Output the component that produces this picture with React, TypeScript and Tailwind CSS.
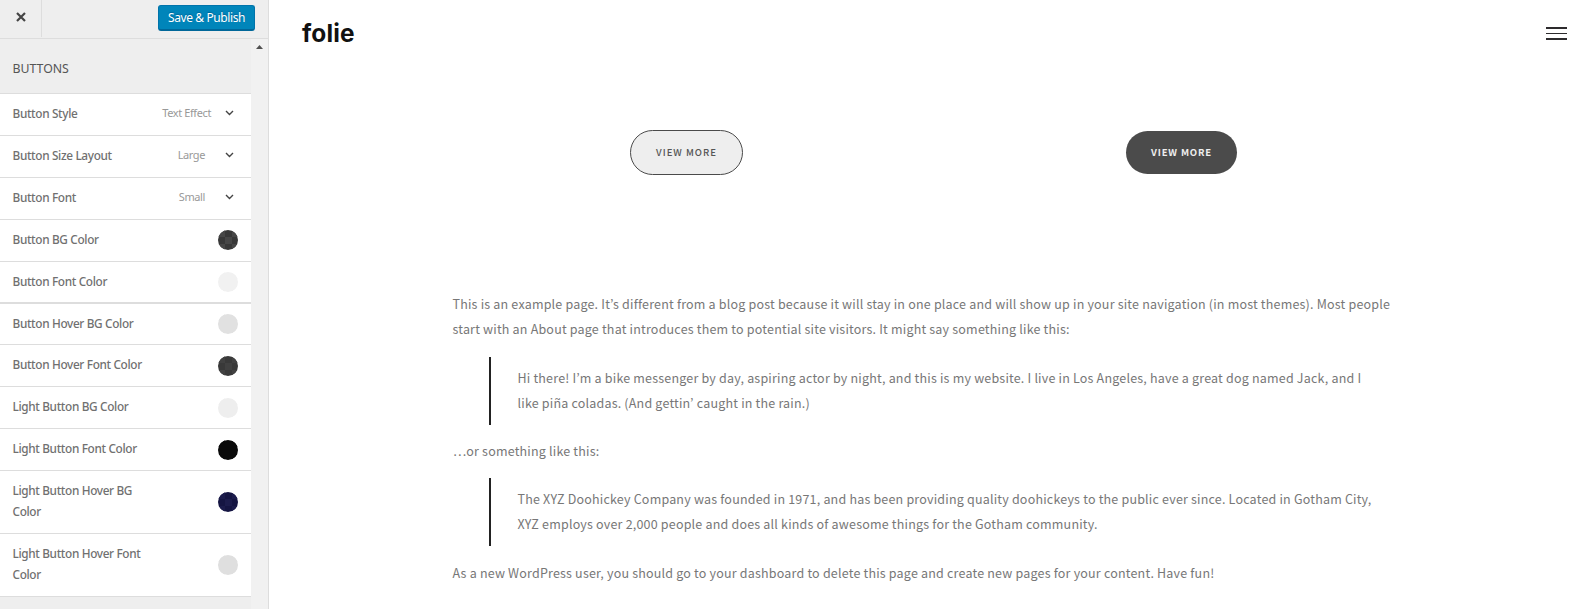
import React from 'react';

type Row = {
  label: string;
  value?: string;
  swatch?: string;
  check?: string;
  box: string;
};

const rows: Row[] = [
  { label: 'Button Style', value: 'Text Effect', box: 'h-[42px] border-b' },
  { label: 'Button Size Layout', value: 'Large', box: 'h-[42px] border-b' },
  { label: 'Button Font', value: 'Small', box: 'h-[42px] border-b' },
  { label: 'Button BG Color', swatch: '#383838', check: '#474747', box: 'h-[42px] border-b [&>svg]:mb-[1px]' },
  { label: 'Button Font Color', swatch: '#f1f1f1', check: '#f1f1f1', box: 'h-[42px] border-b-2' },
  { label: 'Button Hover BG Color', swatch: '#e1e1e1', check: '#e1e1e1', box: 'h-[41px] border-b' },
  { label: 'Button Hover Font Color', swatch: '#393939', check: '#414141', box: 'h-[42px] border-b' },
  { label: 'Light Button BG Color', swatch: '#eeeeee', check: '#eeeeee', box: 'h-[42px] border-b' },
  { label: 'Light Button Font Color', swatch: '#0a0a0a', check: '#0a0a0a', box: 'h-[42px] border-b' },
  { label: 'Light Button Hover BG Color', swatch: '#151542', check: '#1c1c4c', box: 'h-[63px] border-b' },
  { label: 'Light Button Hover Font Color', swatch: '#dfdfdf', check: '#dfdfdf', box: 'h-[63px] border-b' },
];

function Swatch({ base, check }: { base: string; check: string }) {
  return (
    <svg width="20" height="20" viewBox="0 0 20 20" className="mr-[13px] shrink-0 self-center overflow-hidden rounded-full">
      <path d="M0 0h20v20H0z" fill={base} />
      <path d="M0 0h7v7H0zM14 0h6v7h-6zM7 7h7v7H7zM0 14h7v6H0zM14 14h6v6h-6z" fill={check} />
    </svg>
  );
}

function ControlRow({ row }: { row: Row }) {
  return (
    <li className={`flex border-[#dddddd] bg-white pl-[12.5px] ${row.box}`}>
      <span className="w-[140px] pt-[9px] text-[11.8px] leading-[21px] font-medium tracking-[-0.34px] text-[#707070]">
        {row.label}
      </span>
      {row.value && (
        <>
          <span
            className={`flex-1 pt-[8px] text-right text-[11px] leading-[21px] tracking-[-0.4px] text-[#999999] ${
              row.value === 'Text Effect' ? 'mr-[14px]' : 'mr-[20px]'
            }`}
          >
            {row.value}
          </span>
          <svg width="9" height="6" viewBox="0 0 9 6" className="mt-[16px] mr-[17px]" fill="none">
            <path d="M1 1l3.5 3.5L8 1" stroke="#444444" strokeWidth="1.4" />
          </svg>
        </>
      )}
      {row.swatch && (
        <>
          <span className="flex-1" />
          <Swatch base={row.swatch} check={row.check ?? row.swatch} />
        </>
      )}
    </li>
  );
}

function Sidebar() {
  return (
    <aside className="flex w-[269px] shrink-0 flex-col border-r border-[#dddddd] bg-[#eeeeee] font-['Noto_Sans',sans-serif]">
      <header className="flex h-[39px] shrink-0 justify-between border-b border-[#dddddd]">
        <button className="flex h-[37px] w-[42px] items-center justify-center border-r border-[#dddddd]">
          <svg width="10" height="10" viewBox="0 0 10 10" className="mt-[-3px]">
            <path d="M1 1l8 8M9 1L1 9" stroke="#444444" strokeWidth="2.2" />
          </svg>
        </button>
        <button className="mt-[5px] mr-[13px] flex h-[26px] w-[97px] items-center justify-center rounded-[3px] border border-b-2 border-[#0073aa] border-b-[#006799] bg-[#0085ba] text-[12px] tracking-[-0.4px] whitespace-nowrap text-white [text-shadow:0_-1px_1px_#006799]">
          Save &amp; Publish
        </button>
      </header>
      <div className="flex min-h-0 flex-1">
        <div className="w-[251px]">
          <h2 className="h-[55px] border-b border-[#dddddd] pt-[19px] pl-[12.5px] text-[12.3px] leading-[21px] text-[#555555]">
            BUTTONS
          </h2>
          <ul>
            {rows.map((row) => (
              <ControlRow key={row.label} row={row} />
            ))}
          </ul>
        </div>
        <div className="flex flex-1 bg-[#f1f1f1] pt-[6px] pl-[5px]">
          <svg width="7" height="4" viewBox="0 0 7 4">
            <path d="M0 4L3.5 0 7 4z" fill="#505050" />
          </svg>
        </div>
      </div>
    </aside>
  );
}

const quote = 'whitespace-nowrap ml-[36.5px] h-[68px] border-l-2 border-[#222222] pt-[8px] pl-[26.5px]';

export default function App() {
  return (
    <div className="flex h-[609px] w-[1591px] overflow-hidden bg-white">
      <Sidebar />
      <main className="flex-1 font-['Noto_Sans_CJK_KR',sans-serif] text-[12.5px] leading-[25px] tracking-[0.195px] text-[#777777]">
        <header className="flex h-[67px] items-center justify-between pr-[24px] pl-[33px]">
          <a className="font-['Inter',sans-serif] text-[24.4px] leading-none font-bold tracking-[0.15px] text-[#111111]">
            folie
          </a>
          <svg width="21" height="13" viewBox="0 0 21 13" fill="#2d2b2d">
            <path d="M0 0h21v2H0zM0 6h21v1H0zM0 11h21v2H0z" />
          </svg>
        </header>
        <div className="flex h-[171px] items-center pl-[361px] text-[9.5px] tracking-[1px]">
          <button className="flex h-[45px] w-[113px] items-center justify-center rounded-[23px] border border-[#4a4a4a] bg-[#eeeeee] font-medium text-[#555555]">
            VIEW MORE
          </button>
          <button className="ml-[383px] flex h-[43px] w-[111px] items-center justify-center rounded-[22px] bg-[#4b4b4b] font-bold tracking-[0.85px] text-[#eeeeee]">
            VIEW MORE
          </button>
        </div>
        <article className="mt-[53px] pl-[183.5px]">
          <p className="whitespace-nowrap">
            This is an example page. It’s different from a blog post because it will stay in one place and will show up in your site navigation (in most themes). Most people
            <br />
            start with an About page that introduces them to potential site visitors. It might say something like this:
          </p>
          <blockquote className={`${quote} mt-[16px]`}>
            Hi there! I’m a bike messenger by day, aspiring actor by night, and this is my website. I live in Los Angeles, have a great dog named Jack, and I
            <br />
            like piña coladas. (And gettin’ caught in the rain.)
          </blockquote>
          <p className="mt-[13px] pl-[0.5px]">…or something like this:</p>
          <blockquote className={`${quote} mt-[15px]`}>
            The XYZ Doohickey Company was founded in 1971, and has been providing quality doohickeys to the public ever since. Located in Gotham City,
            <br />
            XYZ employs over 2,000 people and does all kinds of awesome things for the Gotham community.
          </blockquote>
          <p className="mt-[14px]">
            As a new WordPress user, you should go to your dashboard to delete this page and create new pages for your content. Have fun!
          </p>
        </article>
      </main>
    </div>
  );
}
